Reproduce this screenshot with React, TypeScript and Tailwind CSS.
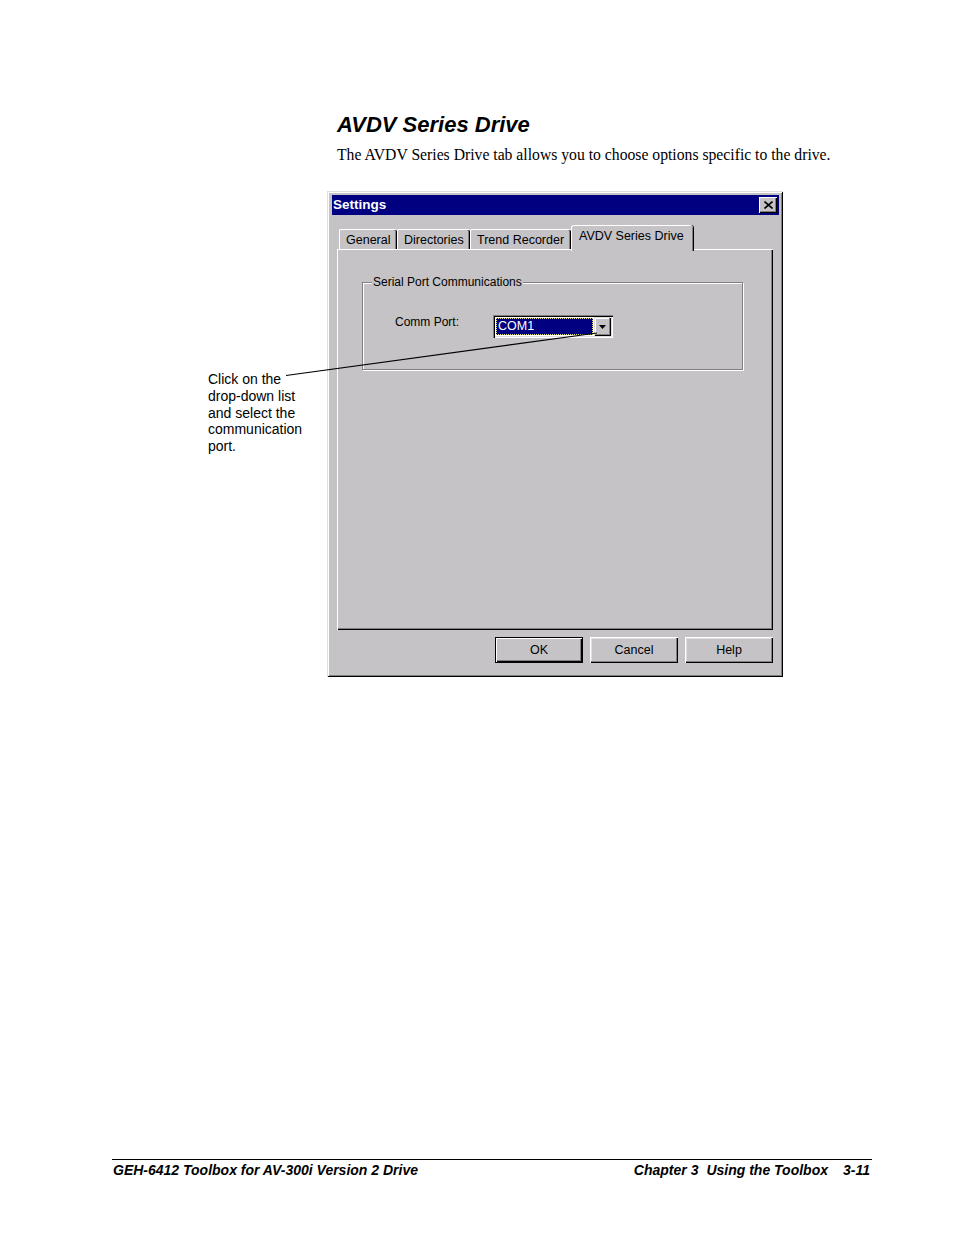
import React from "react";

const ui = "font-['Liberation_Sans',Arial,sans-serif]";

function Tab({ label, w, active }: { label: string; w: string; active?: boolean }) {
  if (active) {
    return (
      <div
        className={`relative z-10 -mb-[2px] h-[26px] ${w} rounded-t-[3px] border-l border-t border-white bg-[#c5c3c6] pl-[7px] pt-[3px] text-[12.5px] leading-[14px] text-black shadow-[inset_-1px_0_0_#808080,1px_0_0_#000]`}
      >
        {label}
      </div>
    );
  }
  return (
    <div
      className={`h-[20px] ${w} rounded-t-[2px] border-l border-t border-white bg-[#c5c3c6] pl-[6px] pt-[3px] text-[12.5px] leading-[14px] text-black shadow-[inset_-1px_0_0_#000,inset_-2px_0_0_#808080]`}
    >
      {label}
    </div>
  );
}

function DlgButton({ label, isDefault }: { label: string; isDefault?: boolean }) {
  return (
    <div
      className={`flex h-[26px] w-[88px] items-center justify-center bg-[#c5c3c6] text-[12.5px] text-black ${
        isDefault
          ? "border border-black shadow-[inset_1px_1px_0_#fff,inset_-1px_-1px_0_#000,inset_-2px_-2px_0_#808080]"
          : "shadow-[inset_1px_1px_0_#fff,inset_-1px_-1px_0_#000,inset_-2px_-2px_0_#808080,inset_2px_2px_0_#dfdfdf]"
      }`}
    >
      {label}
    </div>
  );
}

function ComboBox() {
  return (
    <div className="flex h-[23px] w-[120px] items-stretch bg-white p-[2px] shadow-[inset_1px_1px_0_#808080,inset_2px_2px_0_#000,inset_-1px_-1px_0_#fff,inset_-2px_-2px_0_#dfdfdf]">
      <div className="m-[1px] flex flex-1 items-center border border-dotted border-[#e8e070] bg-[#000080] pl-[1px] text-[12.5px] leading-none text-white">
        COM1
      </div>
      <div className="flex w-[17px] items-center justify-center bg-[#c5c3c6] shadow-[inset_1px_1px_0_#dfdfdf,inset_-1px_-1px_0_#000,inset_-2px_-2px_0_#808080,inset_2px_2px_0_#fff]">
        <svg width="7" height="4" viewBox="0 0 7 4">
          <path d="M0 0h7L3.5 4z" fill="#000" />
        </svg>
      </div>
    </div>
  );
}

function SettingsDialog() {
  return (
    <div
      className={`flex h-[486px] w-[456px] flex-col bg-[#c5c3c6] pb-[4px] pl-[5px] pr-[4px] pt-[4px] ${ui} shadow-[inset_1px_1px_0_#dfdfdf,inset_-1px_-1px_0_#000,inset_2px_2px_0_#fff,inset_-2px_-2px_0_#808080]`}
    >
      <div className="flex h-[20px] items-center justify-between bg-[#000080] pl-[1px] pr-[2px]">
        <span className="text-[13.5px] font-bold leading-none text-white">Settings</span>
        <div className="flex h-[16px] w-[18px] items-center justify-center bg-[#c5c3c6] shadow-[inset_1px_1px_0_#fff,inset_-1px_-1px_0_#000,inset_-2px_-2px_0_#808080]">
          <svg width="9" height="8" viewBox="0 0 9 8">
            <path d="M0.5 0.5L8.5 7.5M8.5 0.5L0.5 7.5" stroke="#000" strokeWidth="1.6" />
          </svg>
        </div>
      </div>

      <div className="ml-[5px] mt-[10px] flex w-[436px] flex-col">
        <div className="flex items-end pl-[2px]">
          <Tab label="General" w="w-[58px]" />
          <Tab label="Directories" w="w-[73px]" />
          <Tab label="Trend Recorder" w="w-[101px]" />
          <Tab label="AVDV Series Drive" w="w-[122px]" active />
        </div>
        <div className="h-[381px] pl-[25px] pt-[33px] shadow-[inset_1px_1px_0_#fff,inset_-1px_-1px_0_#000,inset_-2px_-2px_0_#808080]">
          <div className="relative h-[88px] w-[381px] border border-[#808080] shadow-[1px_1px_0_#fff,inset_1px_1px_0_#fff]">
            <span className="absolute -top-[8px] left-[9px] bg-[#c5c3c6] px-[1px] text-[12px] leading-[14px] text-black">
              Serial Port Communications
            </span>
            <div className="flex items-start pl-[32px] pt-[32px]">
              <span className="w-[98px] text-[12px] leading-[14px] text-black">Comm Port:</span>
              <ComboBox />
            </div>
          </div>
        </div>
        <div className="mt-[7px] flex justify-end gap-[7px]">
          <DlgButton label="OK" isDefault />
          <DlgButton label="Cancel" />
          <DlgButton label="Help" />
        </div>
      </div>
    </div>
  );
}

export default function App() {
  return (
    <div className="relative flex h-[1235px] w-[954px] flex-col bg-white pt-[112px] text-black">
      <div className="ml-[337px]">
        <h2 className="font-['Liberation_Sans',Arial,sans-serif] text-[22px] font-bold italic leading-[26px]">
          AVDV Series Drive
        </h2>
        <p className="mt-[8px] font-['Liberation_Serif','Times_New_Roman',serif] text-[15.7px] leading-[18px]">
          The AVDV Series Drive tab allows you to choose options specific to the drive.
        </p>
      </div>

      <div className="mt-[27px] flex pl-[208px]">
        <div className="w-[119px] pt-[180px] font-['Liberation_Sans',Arial,sans-serif] text-[14px] leading-[16.75px]">
          Click on the
          <br />
          drop-down list
          <br />
          and select the
          <br />
          communication
          <br />
          port.
        </div>
        <SettingsDialog />
      </div>

      <svg className="pointer-events-none absolute left-0 top-0" width="954" height="1235">
        <line x1="286" y1="375.5" x2="597" y2="333" stroke="#000" strokeWidth="1.2" />
      </svg>

      <div className="mb-[57px] ml-[112px] mr-[82px] mt-auto flex justify-between border-t border-black pl-[1px] pr-[2px] pt-[2px] font-['Liberation_Sans',Arial,sans-serif] text-[14px] font-bold italic leading-[16px]">
        <span>GEH-6412 Toolbox for AV-300i Version 2 Drive</span>
        <span>
          Chapter 3<span className="ml-[8px]">Using the Toolbox</span>
          <span className="ml-[15px]">3-11</span>
        </span>
      </div>
    </div>
  );
}
